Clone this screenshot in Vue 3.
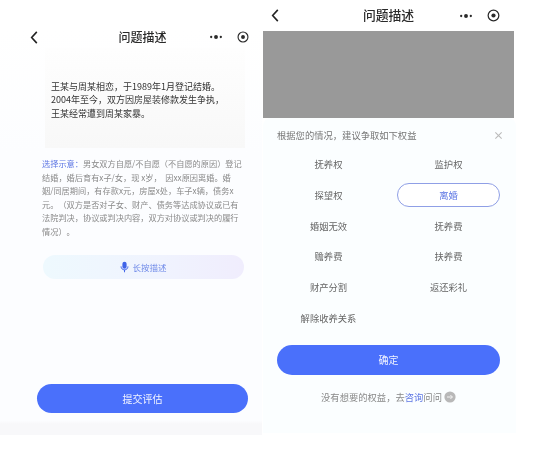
<script setup>
const C = '\uFF0C'
const LP = '\uFF08'
const RP = '\uFF09'
const D = '\u3001'
const storyLines = [`王某与周某相恋${C}于1989年1月登记结婚。`, `2004年至今${C}双方因房屋装修款发生争执${C}`, '王某经常遭到周某家暴。']
const exampleLines = [
  `男女双方自愿/不自愿${LP}不自愿的原因${RP}登记`,
  `结婚${C}婚后育有x子/女${C}现 x岁${C}  因xx原因离婚。婚`,
  `姻/同居期间${C}有存款x元${C}房屋x处${C}车子x辆${C}债务x`,
  `元。${LP}双方是否对子女${D}财产${D}债务等达成协议或已有`,
  `法院判决${C}协议或判决内容${C}双方对协议或判决的履行`,
  `情况${RP}。`
]
const rights = ['抚养权', '监护权', '探望权', '离婚', '婚姻无效', '抚养费', '赡养费', '扶养费', '财产分割', '返还彩礼', '解除收养关系']
const sheetTitle = `根据您的情况${C}建议争取如下权益`
const hintText = `没有想要的权益${C}去`
const exampleLabel = '选择示意\uFF1A'
</script>

<template>
  <div class="page">
    <section class="phone left">
      <header class="nav nav-left">
        <svg class="back" viewBox="0 0 10 16"><path d="M8 2 2.5 8 8 14" /></svg>
        <h1 class="title">问题描述</h1>
        <div class="nav-tools">
          <svg class="dots" viewBox="0 0 16 6"><circle cx="2.5" cy="3" r="1.3" /><circle cx="8" cy="3" r="2.2" /><circle cx="13.5" cy="3" r="1.3" /></svg>
          <svg class="target" viewBox="0 0 16 16"><circle class="ring" cx="8" cy="8" r="6.6" /><circle cx="8" cy="8" r="2.6" /></svg>
        </div>
      </header>
      <div class="story">
        <p v-for="line in storyLines" :key="line">{{ line }}</p>
      </div>
      <div class="example">
        <p v-for="(line, i) in exampleLines" :key="line"><span v-if="i === 0" class="accent">{{ exampleLabel }}</span>{{ line }}</p>
      </div>
      <div class="voice">
        <svg class="mic" viewBox="0 0 12 16">
          <rect x="3.2" y="1" width="5.6" height="9.4" rx="2.8" />
          <path d="M1.4 7.2c0 2.8 2.1 4.6 4.6 4.6s4.6-1.8 4.6-4.6M6 11.8V15" />
        </svg>
        <span>长按描述</span>
      </div>
      <div class="spacer"></div>
      <button class="primary submit">提交评估</button>
      <div class="left-foot"></div>
    </section>

    <section class="phone right">
      <header class="nav nav-right">
        <svg class="back" viewBox="0 0 10 16"><path d="M8 2 2.5 8 8 14" /></svg>
        <h1 class="title">问题描述</h1>
        <div class="nav-tools">
          <svg class="dots" viewBox="0 0 16 6"><circle cx="2.5" cy="3" r="1.3" /><circle cx="8" cy="3" r="2.2" /><circle cx="13.5" cy="3" r="1.3" /></svg>
          <svg class="target" viewBox="0 0 16 16"><circle class="ring" cx="8" cy="8" r="6.6" /><circle cx="8" cy="8" r="2.6" /></svg>
        </div>
      </header>
      <div class="mask"></div>
      <div class="sheet">
        <div class="sheet-head">
          <span>{{ sheetTitle }}</span>
          <svg class="close" viewBox="0 0 10 10"><path d="M1.5 1.5l7 7M8.5 1.5l-7 7" /></svg>
        </div>
        <div class="grid">
          <div v-for="item in rights" :key="item" class="cell" :class="{ active: item === '离婚' }">{{ item }}</div>
        </div>
        <button class="primary confirm">确定</button>
        <div class="hint">
          <span>{{ hintText }}</span><span class="accent">咨询</span><span>问问</span>
          <svg class="go" viewBox="0 0 12 12"><circle cx="6" cy="6" r="5.6" /><path d="M3 6h5.4M6.4 4l2 2-2 2" /></svg>
        </div>
      </div>
    </section>
  </div>
</template>

<style>
html, body { margin: 0; background: #fff; }
</style>

<style scoped>
.page {
  width: 550px;
  height: 454px;
  display: flex;
  align-items: flex-start;
  gap: 1px;
  background: #fff;
  overflow: hidden;
  font-family: "Noto Sans CJK SC", "Liberation Sans", sans-serif;
  text-spacing-trim: space-all;
  filter: blur(0.45px);
}
.phone {
  display: flex;
  flex-direction: column;
  box-sizing: border-box;
}
.left {
  width: 262px;
  height: 435px;
  background: linear-gradient(180deg, #fff 0%, #fff 7%, #fcfdff 35%, #fcfdff 100%);
}
.right {
  width: 253px;
  height: 433px;
}
.nav {
  position: relative;
  display: flex;
  align-items: center;
  justify-content: center;
  flex: none;
}
.nav-left { height: 22px; margin-top: 26px; padding: 0 7px 0 30px; }
.nav-right { height: 31px; padding: 0 10px 0 8px; background: #fff; }
.title {
  margin: 0;
  font-weight: 500;
  color: #2a2a2a;
  line-height: 1;
}
.nav-left .title { font-size: 12px; }
.nav-right .title { font-size: 12.8px; }
.back {
  position: absolute;
  width: 10px;
  height: 15px;
  fill: none;
  stroke: #222;
  stroke-width: 1.7;
}
.nav-left .back { left: 29px; }
.nav-right .back { left: 7px; }
.nav-tools {
  position: absolute;
  display: flex;
  align-items: center;
}
.nav-left .nav-tools { left: 209px; gap: 14px; }
.nav-right .nav-tools { left: 196px; gap: 14px; }
.dots { width: 14px; height: 6px; fill: #2a2a2a; }
.target { width: 12px; height: 12px; fill: #2a2a2a; }
.nav-right .target { width: 13px; height: 13px; }
.ring { fill: none; stroke: #2a2a2a; stroke-width: 1.5; }

.story {
  margin: 0 17px 0 45px;
  padding: 32px 0 0 6px;
  height: 100px;
  box-sizing: border-box;
  background: linear-gradient(180deg, #fefefe 0%, #f8f8f8 100%);
  font-size: 9px;
  line-height: 13.3px;
  color: #333;
}
.story p, .example p { margin: 0; white-space: pre; }
.example {
  margin: 9px 0 0 42px;
  font-size: 8.2px;
  line-height: 13.6px;
  color: #8a8a8a;
}
.accent { color: #5f78e4; }
.voice {
  margin: 16px 18px 0 43px;
  height: 24px;
  flex: none;
  border-radius: 12px;
  display: flex;
  align-items: center;
  justify-content: center;
  gap: 3px;
  background: linear-gradient(90deg, #eef9fe 0%, #f0f3fe 60%, #f0edfd 100%);
  color: #6f8ae8;
  font-size: 8.5px;
}
.mic { width: 9px; height: 12px; }
.mic rect { fill: #3f63e8; }
.mic path { fill: none; stroke: #3f63e8; stroke-width: 1.3; }
.spacer { flex: 1; }
.primary {
  display: block;
  border: none;
  padding: 0;
  background: #4a70fb;
  color: #f2f4ff;
  font-family: inherit;
}
.submit {
  margin: 0 14px 0 37px;
  height: 29px;
  border-radius: 15px;
  font-size: 10px;
  flex: none;
}
.left-foot {
  height: 22px;
  flex: none;
  background: linear-gradient(180deg, #fcfdff 0%, #fcfdff 35%, #f8f8fa 50%, #f8f8fa 100%);
}

.mask {
  height: 87px;
  width: 251px;
  flex: none;
  background: #999;
}
.sheet {
  flex: 1;
  border-radius: 8px 8px 0 0;
  background: #fbfeff;
  padding: 0 16px 0 14px;
  display: flex;
  flex-direction: column;
}
.sheet-head {
  display: flex;
  align-items: center;
  justify-content: space-between;
  height: 34px;
  margin-right: -3px;
  font-size: 9.3px;
  color: #777;
}
.close { width: 9px; height: 9px; fill: none; stroke: #bbb; stroke-width: 1.2; }
.grid {
  display: grid;
  grid-template-columns: 103px 103px;
  column-gap: 17px;
  grid-auto-rows: 24px;
  row-gap: 6.8px;
}
.cell {
  display: flex;
  align-items: center;
  justify-content: center;
  font-size: 9.3px;
  color: #666;
  border-radius: 12px;
}
.cell.active {
  box-sizing: border-box;
  border: 1px solid #8f9fe6;
  background: #fff;
  color: #5f78e4;
}
.confirm {
  margin-top: 15px;
  width: 223px;
  height: 30px;
  border-radius: 15px;
  font-size: 10px;
  flex: none;
}
.hint {
  margin-top: 15px;
  display: flex;
  align-items: center;
  justify-content: center;
  font-size: 9.3px;
  line-height: 14px;
  color: #888;
  white-space: nowrap;
}
.hint .accent { color: #5f78e4; }
.go { width: 12px; height: 12px; margin-left: 2px; }
.go circle { fill: #b8b8b8; }
.go path { fill: none; stroke: #f2f2f2; stroke-width: 1; }
</style>
